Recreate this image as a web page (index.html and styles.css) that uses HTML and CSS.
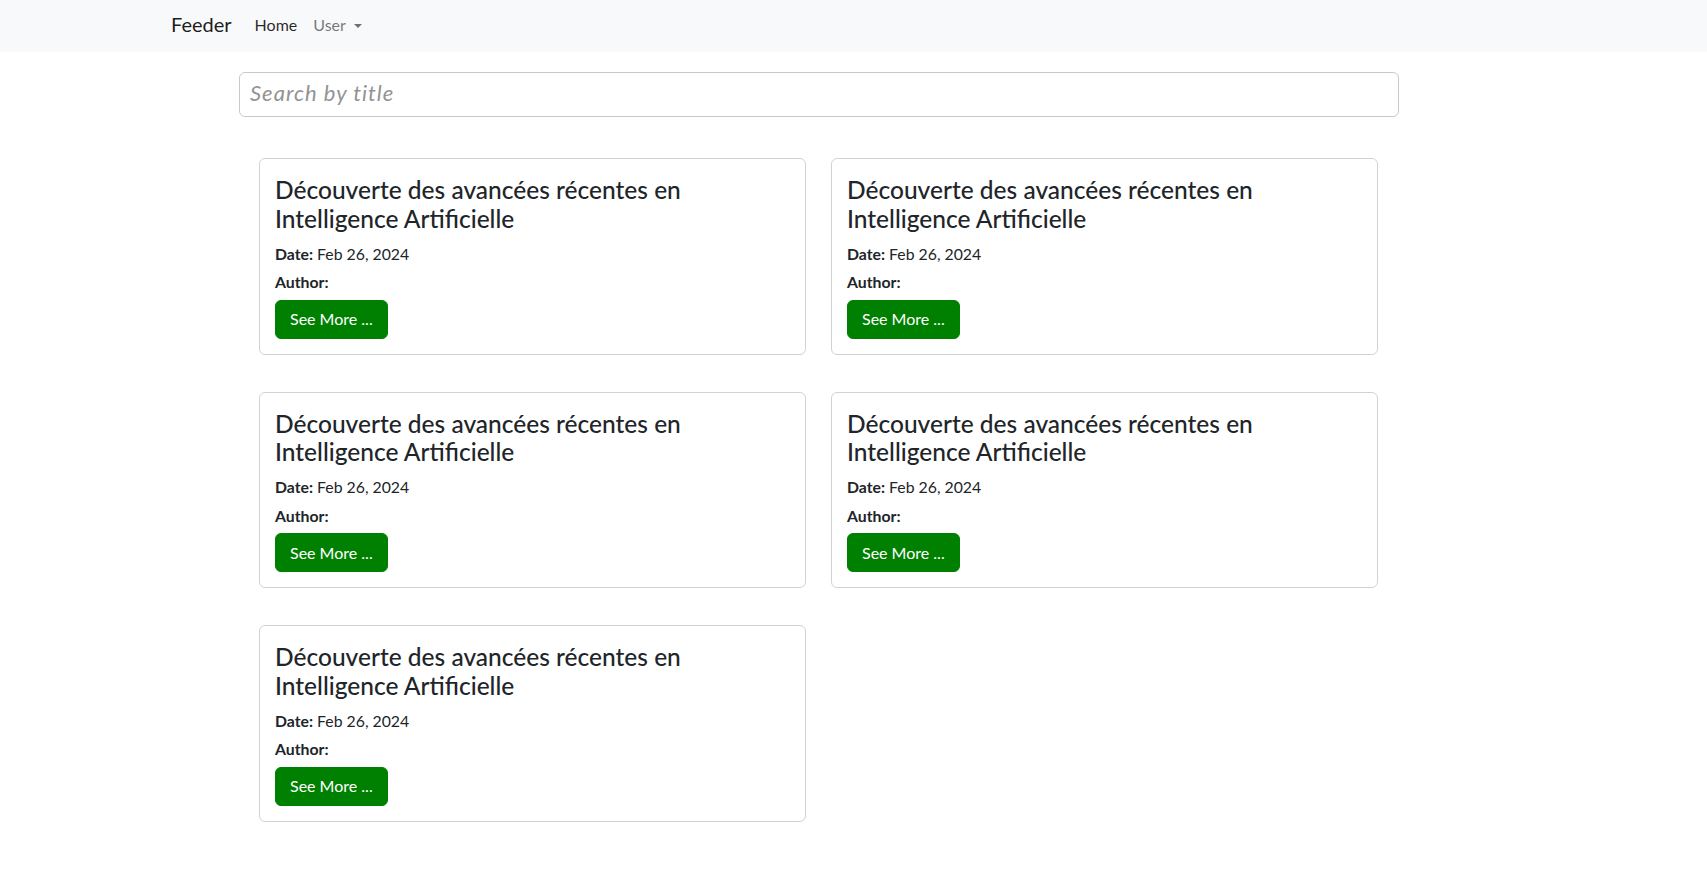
FILE: index.html
```html
<!DOCTYPE html>
<html lang="en">
<head>
<meta charset="utf-8">
<title>Feeder</title>
<link rel="stylesheet" href="styles.css">
</head>
<body>
<nav class="navbar">
  <a class="brand" href="#">Feeder</a>
  <ul class="nav">
    <li><a class="nav-link active" href="#">Home</a></li>
    <li><a class="nav-link dropdown" href="#">User<span class="caret"></span></a></li>
  </ul>
</nav>
<main class="page">
  <input class="search" type="text" placeholder="Search by title">
  <div class="feed">
    <div class="card">
      <h4 class="card-title">Découverte des avancées récentes en Intelligence Artificielle</h4>
      <p class="meta"><b>Date:</b> Feb 26, 2024</p>
      <p class="meta"><b>Author:</b></p>
      <a class="btn" href="#">See More ...</a>
    </div>
    <div class="card">
      <h4 class="card-title">Découverte des avancées récentes en Intelligence Artificielle</h4>
      <p class="meta"><b>Date:</b> Feb 26, 2024</p>
      <p class="meta"><b>Author:</b></p>
      <a class="btn" href="#">See More ...</a>
    </div>
    <div class="card">
      <h4 class="card-title">Découverte des avancées récentes en Intelligence Artificielle</h4>
      <p class="meta"><b>Date:</b> Feb 26, 2024</p>
      <p class="meta"><b>Author:</b></p>
      <a class="btn" href="#">See More ...</a>
    </div>
    <div class="card">
      <h4 class="card-title">Découverte des avancées récentes en Intelligence Artificielle</h4>
      <p class="meta"><b>Date:</b> Feb 26, 2024</p>
      <p class="meta"><b>Author:</b></p>
      <a class="btn" href="#">See More ...</a>
    </div>
    <div class="card">
      <h4 class="card-title">Découverte des avancées récentes en Intelligence Artificielle</h4>
      <p class="meta"><b>Date:</b> Feb 26, 2024</p>
      <p class="meta"><b>Author:</b></p>
      <a class="btn" href="#">See More ...</a>
    </div>
  </div>
</main>
</body>
</html>
```
FILE: styles.css
```css
* { box-sizing: border-box; }

body {
  margin: 0;
  background: #fff;
  color: #212529;
  font-family: Lato, "Open Sans", sans-serif;
  font-size: 15px;
}

.navbar {
  height: 52px;
  background: #f8f9fa;
  display: flex;
  align-items: flex-start;
  padding: 9px 0 0 171px;
}

.brand {
  font-size: 20px;
  line-height: 30px;
  color: rgba(0, 0, 0, 0.9);
  text-decoration: none;
  margin-right: 23px;
}

.nav {
  list-style: none;
  margin: 0;
  padding: 3.5px 0 0;
  display: flex;
  gap: 16px;
}

.nav-link {
  font-size: 16px;
  line-height: 24px;
  color: rgba(0, 0, 0, 0.55);
  text-decoration: none;
}

.nav-link.active { color: rgba(0, 0, 0, 0.85); }

.caret {
  display: inline-block;
  margin-left: 8px;
  vertical-align: 3px;
  border-top: 4.5px solid rgba(0, 0, 0, 0.55);
  border-left: 4px solid transparent;
  border-right: 4px solid transparent;
}

.page {
  width: 1160px;
  margin-left: 239px;
  padding-top: 20px;
}

.search {
  display: block;
  width: 100%;
  height: 45px;
  padding: 0 10px 4px;
  border: 1px solid #c9c9c9;
  border-radius: 6px;
  font-family: Lato, "Open Sans", sans-serif;
  font-size: 22px;
  letter-spacing: 1px;
  color: #212529;
  outline: none;
}

.search::placeholder {
  font-style: italic;
  color: #939393;
}

.feed {
  display: grid;
  grid-template-columns: 547px 547px;
  column-gap: 25px;
  row-gap: 37px;
  padding: 41px 20px 0 20px;
  align-items: start;
}

.card {
  border: 1px solid rgba(0, 0, 0, 0.175);
  border-radius: 6px;
  padding: 17px 14px 15px 15px;
}

.card-title {
  font-size: 24.5px;
  font-weight: 500;
  line-height: 28.8px;
  margin: 0 0 9px;
  max-width: 470px;
}

.meta {
  font-size: 15.8px;
  line-height: 22.5px;
  margin: 0 0 6px;
}

.meta b { font-weight: 700; }

.btn {
  display: inline-block;
  height: 39px;
  padding: 6.5px 14px;
  font-size: 16px;
  line-height: 24px;
  color: #fff;
  background: #008000;
  border: 1px solid #008000;
  border-radius: 6px;
  text-decoration: none;
  vertical-align: top;
}
```
